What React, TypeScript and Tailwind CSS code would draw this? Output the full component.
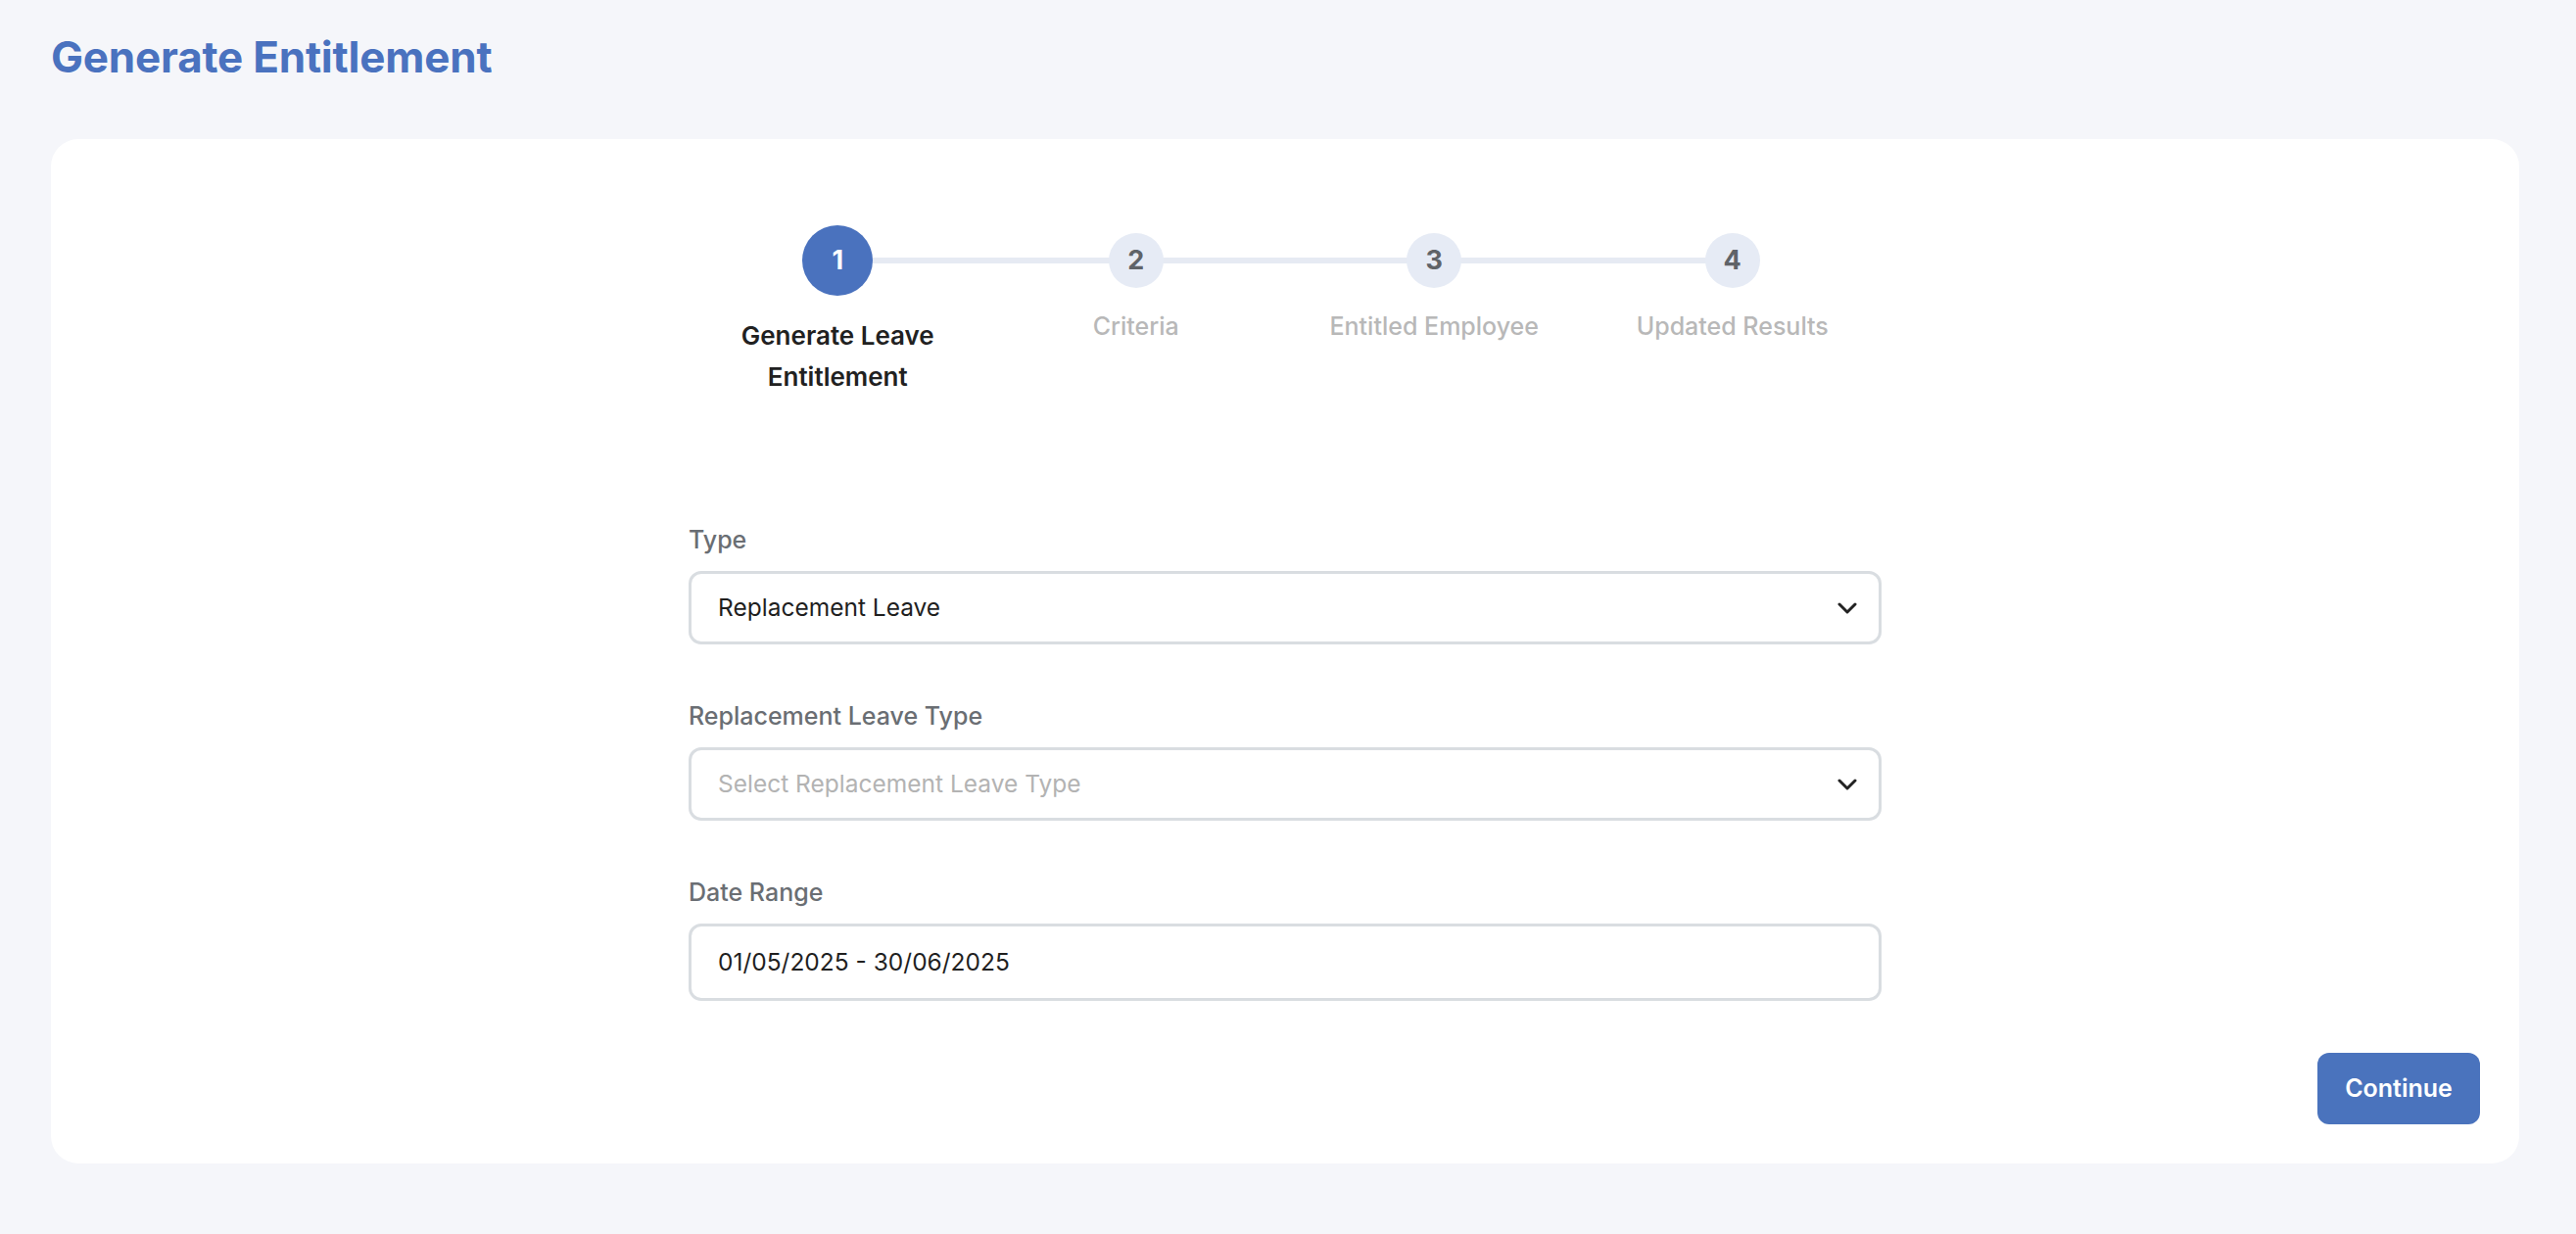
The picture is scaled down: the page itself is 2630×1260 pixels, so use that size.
const steps = [
    { n: 1, label: 'Generate Leave Entitlement' },
    { n: 2, label: 'Criteria' },
    { n: 3, label: 'Entitled Employee' },
    { n: 4, label: 'Updated Results' },
];

function Chevron() {
    return (
        <svg viewBox="0 0 20 12" className="h-[12px] w-[20px]" fill="none">
            <path d="M2 2l8 8 8-8" stroke="#222" strokeWidth="3" strokeLinecap="round" strokeLinejoin="round" />
        </svg>
    );
}

function Stepper({ current = 1 }) {
    return (
        <div className="relative grid grid-cols-4">
            {/* connector between first and last circle centres */}
            <div className="absolute left-[152px] right-[152px] top-[33px] h-[6px] bg-[#e6eaf3]" />
            {steps.map((s) => {
                const active = s.n === current;
                return (
                    <div key={s.n} className="relative flex flex-col items-center">
                        {active ? (
                            <div className="flex h-[72px] w-[72px] items-center justify-center rounded-full bg-[#4a72be] text-[27px] font-bold text-white">
                                {s.n}
                            </div>
                        ) : (
                            <div className="mt-[8px] flex h-[56px] w-[56px] items-center justify-center rounded-full bg-[#e6ebf5] text-[27px] font-bold text-[#5f6368]">
                                {s.n}
                            </div>
                        )}
                        <div
                            className={
                                active
                                    ? 'mt-[20px] max-w-[230px] text-center text-[26px] font-semibold leading-[42px] text-[#212121]'
                                    : 'mt-[18px] max-w-[260px] text-center text-[25px] font-medium leading-[42px] text-[#b8b8b8]'
                            }
                        >
                            {s.label}
                        </div>
                    </div>
                );
            })}
        </div>
    );
}

function Field({ label, children }: { label: string; children: React.ReactNode }) {
    return (
        <div className="flex flex-col gap-[14px]">
            <label className="text-[25px] font-medium leading-[36px] text-[#6a6e73]">{label}</label>
            {children}
        </div>
    );
}

function Select({ value, placeholder }: { value?: string; placeholder: string }) {
    return (
        <div className="flex h-[75px] items-center justify-between rounded-[13px] border-[3px] border-[#d9dde1] bg-white pl-[27px] pr-[22px]">
            <span className={value ? 'text-[24.5px] text-[#1f1f1f]' : 'text-[24.5px] text-[#b3b3b3]'}>
                {value ?? placeholder}
            </span>
            <Chevron />
        </div>
    );
}

export default function App() {
    return (
        <div className="min-h-screen bg-[#f5f6fa] pl-[52px] pr-[58px] font-['Inter',sans-serif]">
            <h1 className="pt-[31px] text-[44px] font-bold leading-[54px] tracking-[-0.2px] text-[#4a72bf]">
                Generate Entitlement
            </h1>

            <div className="mt-[57px] flex flex-col rounded-[28px] bg-white px-[40px] pb-[40px] pt-[88px]">
                <div className="mx-auto w-[1218px]">
                    <Stepper current={1} />

                    <div className="mt-[127px] flex flex-col gap-[55px]">
                        <Field label="Type">
                            <Select value="Replacement Leave" placeholder="Select Type" />
                        </Field>
                        <Field label="Replacement Leave Type">
                            <Select placeholder="Select Replacement Leave Type" />
                        </Field>
                        <Field label="Date Range">
                            <div className="flex h-[79px] items-center rounded-[13px] border-[3px] border-[#d9dde1] bg-white pl-[27px] text-[24.5px] text-[#1f1f1f]">
                                01/05/2025 - 30/06/2025
                            </div>
                        </Field>
                    </div>
                </div>

                <div className="mt-[53px] flex justify-end">
                    <button className="h-[73px] w-[166px] rounded-[12px] bg-[#4a73bd] text-[25px] font-semibold text-white">
                        Continue
                    </button>
                </div>
            </div>
        </div>
    );
}
